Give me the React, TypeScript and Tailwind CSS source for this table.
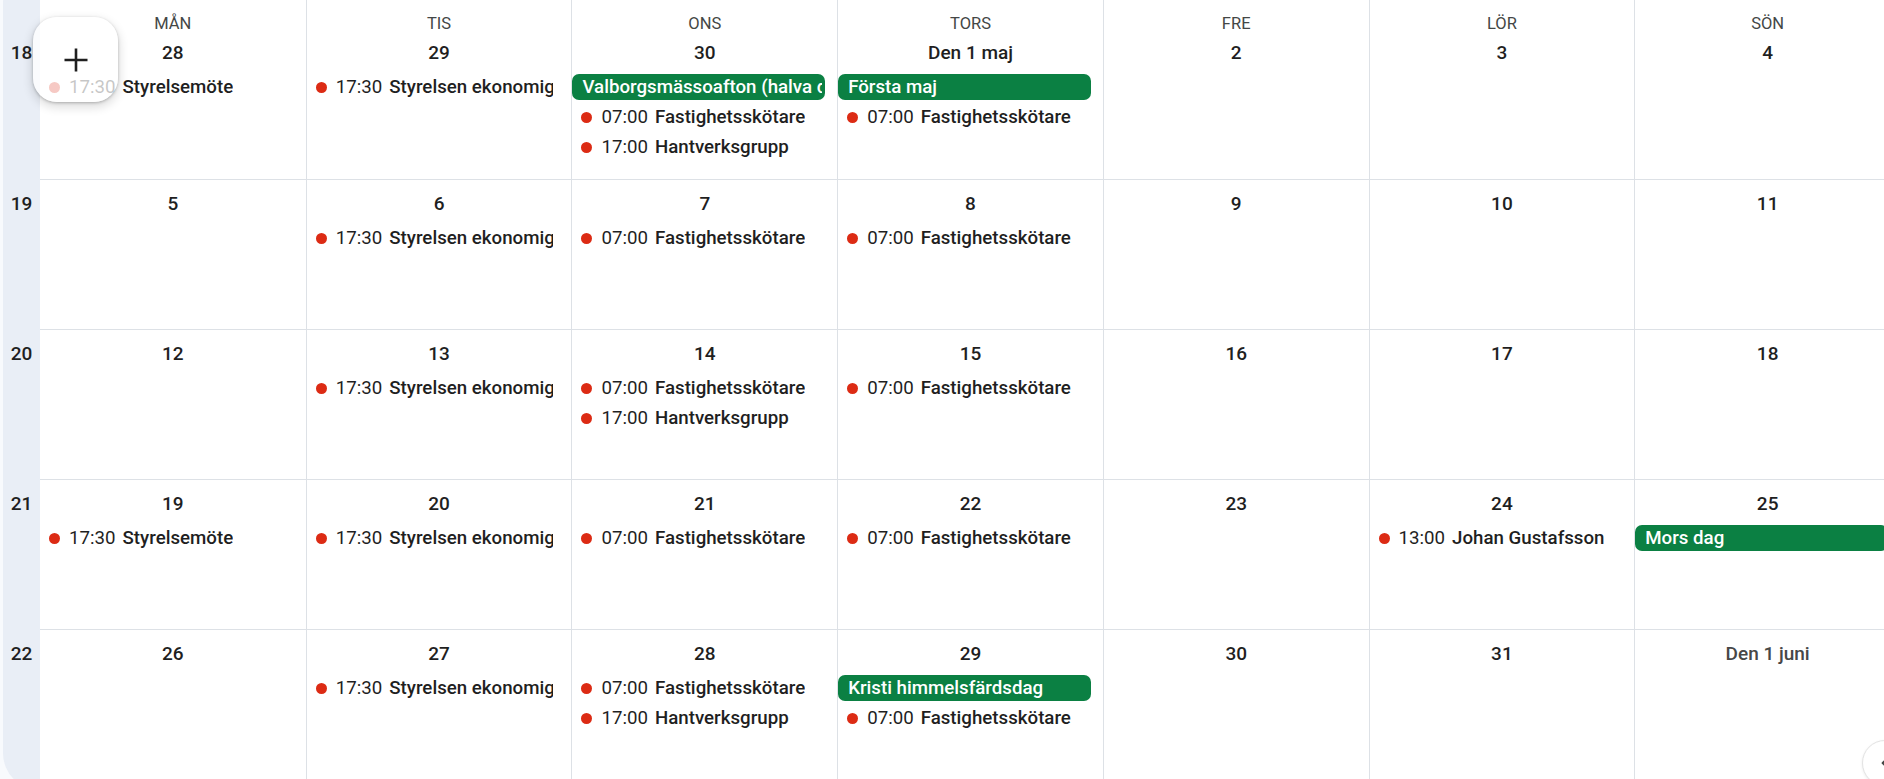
import { ChevronLeft } from "lucide-react";

type Ev = { time?: string; title: string; allDay?: boolean };
type Day = { label: string; muted?: boolean; events: Ev[] };

const DAY_NAMES = ["MÅN", "TIS", "ONS", "TORS", "FRE", "LÖR", "SÖN"];

const F = (): Ev => ({ time: "07:00", title: "Fastighetsskötare" });
const H = (): Ev => ({ time: "17:00", title: "Hantverksgrupp" });
const S = (): Ev => ({ time: "17:30", title: "Styrelsen ekonomigrupp" });
const M = (): Ev => ({ time: "17:30", title: "Styrelsemöte" });
const d = (label: string, events: Ev[] = [], muted = false): Day => ({ label, events, muted });

const WEEKS: { no: number; days: Day[] }[] = [
  {
    no: 18,
    days: [
      d("28", [M()]),
      d("29", [S()]),
      d("30", [{ title: "Valborgsmässoafton (halva dagen)", allDay: true }, F(), H()]),
      d("Den 1 maj", [{ title: "Första maj", allDay: true }, F()]),
      d("2"),
      d("3"),
      d("4"),
    ],
  },
  { no: 19, days: [d("5"), d("6", [S()]), d("7", [F()]), d("8", [F()]), d("9"), d("10"), d("11")] },
  { no: 20, days: [d("12"), d("13", [S()]), d("14", [F(), H()]), d("15", [F()]), d("16"), d("17"), d("18")] },
  {
    no: 21,
    days: [
      d("19", [M()]),
      d("20", [S()]),
      d("21", [F()]),
      d("22", [F()]),
      d("23"),
      d("24", [{ time: "13:00", title: "Johan Gustafsson" }]),
      d("25", [{ title: "Mors dag", allDay: true }]),
    ],
  },
  {
    no: 22,
    days: [
      d("26"),
      d("27", [S()]),
      d("28", [F(), H()]),
      d("29", [{ title: "Kristi himmelsfärdsdag", allDay: true }, F()]),
      d("30"),
      d("31"),
      d("Den 1 juni", [], true),
    ],
  },
];

function Chip({ ev }: { ev: Ev }) {
  if (ev.allDay) {
    return (
      <div className="mr-3 flex h-[26px] items-center overflow-hidden whitespace-nowrap rounded-[7px] bg-[#0b8043] pl-[10px] pr-[3px] text-[18.7px] font-medium text-white">
        <span className="min-w-0 overflow-hidden">{ev.title}</span>
      </div>
    );
  }
  return (
    <div className="mr-[18px] flex h-[26px] items-center pl-[9px] text-[18.7px] text-[#1f1f1f]">
      <span className="mr-[9px] h-[11px] w-[11px] shrink-0 rounded-full bg-[#dc2b14]" />
      <span className="min-w-0 overflow-hidden whitespace-nowrap">
        {ev.time}
        <span className="ml-[7px] font-medium">{ev.title}</span>
      </span>
    </div>
  );
}

export default function App() {
  return (
    <div className="relative h-[779px] w-[1884px] overflow-hidden bg-[#f8fafd] font-['Roboto',sans-serif]">
      <div className="flex">
        {/* week numbers */}
        <div className="ml-[3px] mt-[-34px] flex h-[824px] w-[37px] shrink-0 flex-col rounded-l-[60px] bg-[#e9eef6] pt-[34px]">
          {WEEKS.map((w, i) => (
            <div
              key={w.no}
              className={[
                "shrink-0 text-center text-[19px] font-medium leading-6 text-[#1f1f1f]",
                i === 0 ? "h-[179px] pt-[41px]" : "h-[150px] pt-[13px]",
              ].join(" ")}
            >
              {w.no}
            </div>
          ))}
        </div>

        {/* month grid */}
        <div className="grid w-[1860px] shrink-0 grid-cols-7 grid-rows-[179px_150px_150px_150px_150px] bg-white">
          {WEEKS.map((w, wi) =>
            w.days.map((day, di) => (
              <div
                key={`${w.no}-${di}`}
                className={[
                  "flex min-w-0 flex-col border-[#dde1e6]",
                  wi > 0 ? "border-t pt-[12px]" : "pt-[14px]",
                  di > 0 ? "border-l" : "",
                ].join(" ")}
              >
                {wi === 0 && (
                  <div className="mb-[7px] text-center text-[16.5px] leading-5 text-[#444746]">
                    {DAY_NAMES[di]}
                  </div>
                )}
                <div
                  className={[
                    "text-center text-[19px] font-medium leading-6",
                    day.muted ? "text-[#474747]" : "text-[#1f1f1f]",
                  ].join(" ")}
                >
                  {day.label}
                </div>
                <div className="mt-[9px] flex flex-col gap-[4px]">
                  {day.events.map((ev, k) => (
                    <Chip key={k} ev={ev} />
                  ))}
                </div>
              </div>
            ))
          )}
        </div>
      </div>

      {/* create button */}
      <button
        type="button"
        className="absolute left-[33px] top-[17px] flex h-[85px] w-[85px] items-center justify-center rounded-[24px] bg-white/75 shadow-[0_1px_3px_rgba(0,0,0,0.25),0_4px_10px_2px_rgba(0,0,0,0.12)]"
      >
        <svg width="26" height="26" viewBox="0 0 26 26">
          <path d="M13 1.5v23M1.5 13h23" stroke="#1f1f1f" strokeWidth="2.6" />
        </svg>
      </button>

      {/* side panel toggle */}
      <button
        type="button"
        className="absolute left-[1862px] top-[740px] flex h-[46px] w-[46px] items-center justify-center rounded-full border border-[#e3e3e3] bg-white shadow-[0_1px_3px_rgba(0,0,0,0.08)]"
      >
        <ChevronLeft size={18} strokeWidth={3} color="#444746" />
      </button>
    </div>
  );
}
